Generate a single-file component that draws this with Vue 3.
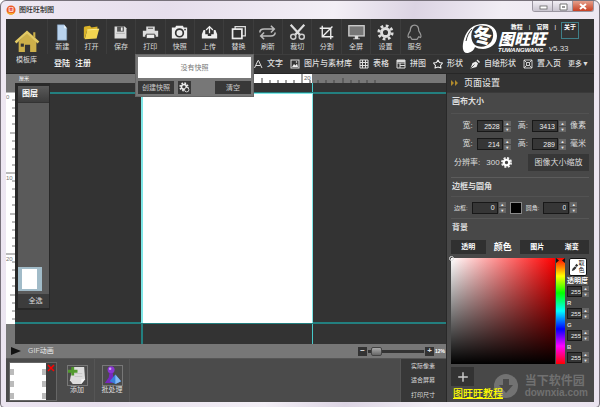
<script setup>
import { ref } from 'vue'

const tools = [
  { label: '新建', icon: '<path d="M4 1h8l3 4v14H4z" fill="#b9d3ee" stroke="#7f9fc0" stroke-width=".6"/><path d="M12 1v4h3z" fill="#edf5fc"/>' },
  { label: '打开', icon: '<path d="M1 4l1-1 6-1 2 2 7-1v4H5L2 17H1z" fill="#d9b227"/><path d="M5 7l14-1-3 11-14 1z" fill="#f3d550"/><path d="M5 7l14-1" stroke="#fff2a0"/>' },
  { label: '保存', icon: '<path d="M3 3h12l2 2v12H3z" fill="#ddd"/><path d="M6 3h8v6H6z" fill="#555"/><path d="M10.500 4h2v4h-2z" fill="#eee"/><path d="M5 11h10" stroke="#aaa"/>' },
  { label: '打印', icon: '<path d="M5 3h10v5H5zM1 8h18v7h-3v-2H4v2H1z" fill="#ddd"/><path d="M5 12h10v5H5z" fill="#eee" stroke="#333"/><path d="M7 5h6" stroke="#333"/>' },
  { label: '快照', icon: '<path d="M1 4h4l1-2h8l1 2h4v13H1z" fill="#eee"/><circle cx="10" cy="10.500" r="4.500" fill="#eee" stroke="#333" stroke-width="2"/><circle cx="16.500" cy="6.500" r="1" fill="#333"/>' },
  { label: '上传', icon: '<path d="M5 7H3l-2 5v5h18v-5l-2-5h-2v5h-3v2H8v-2H5z" fill="#eee"/><path d="M10 11V3M6 7l4-4 4 4" fill="none" stroke="#eee" stroke-width="1.500"/>' },
  { label: '替换', icon: '<path d="M6 6V3h12v11h-4" fill="none" stroke="#ddd" stroke-width="1.500"/><rect x="3" y="6" width="11" height="11" fill="#333" stroke="#eee" stroke-width="2"/>' },
  { label: '刷新', icon: '<path d="M1 10c0-3 2-4 5-4h11M14 2l4 4-4 4M19 10c0 3-2 4-5 4H3M6 10l-4 4 4 4" fill="none" stroke="#bbb" stroke-width="1.800"/>' },
  { label: '裁切', icon: '<path d="M2 1l11 12M18 1L7 13" stroke="#ddd" stroke-width="2.600"/><circle cx="5" cy="15" r="3" fill="none" stroke="#ccc" stroke-width="1.800"/><circle cx="15" cy="15" r="3" fill="none" stroke="#ccc" stroke-width="1.800"/>' },
  { label: '分割', icon: '<path d="M5 2v13h13M2 5h13v13M5 15L17 3" fill="none" stroke="#eee" stroke-width="1.600"/>' },
  { label: '全屏', icon: '<rect x="1" y="2" width="18" height="12" fill="#777" stroke="#ccc" stroke-width="1.600"/><path d="M8 14h4v3h2v1H6v-1h2z" fill="#ddd"/>' },
  { label: '设置', icon: '<circle cx="10" cy="10" r="7.800" fill="none" stroke="#ddd" stroke-width="3.400" stroke-dasharray="3.200 2.930"/><circle cx="10" cy="10" r="4.700" fill="none" stroke="#ddd" stroke-width="3.400"/>' },
  { label: '服务', icon: '<path d="M5 8c0-9 10-9 10 0 2 3 4 6 2 8l-2-1-2 3H7l-2-3-2 1c-2-2 0-5 2-8z" fill="none" stroke="#999" stroke-width="1.400"/>' }
]

const inserts = [
  { label: '文字', icon: '<path d="M3 18L10 3h1l7 15M6 13h9" fill="none" stroke="#ddd" stroke-width="2"/>' },
  { label: '图片与素材库', icon: '<path d="M1 1h18v18H1z" fill="#ddd"/><path d="M3 3h14v14H3z" fill="#333"/><path d="M4 16l4-6 3 3 3-4 2 7z" fill="#eee"/><circle cx="13" cy="6" r="1.500" fill="#eee"/>' },
  { label: '表格', icon: '<path d="M2 2h16v16H2zM7 2v16M13 2v16M2 7h16M2 13h16" fill="none" stroke="#ddd" stroke-width="2"/>' },
  { label: '拼图', icon: '<path d="M2 2h16v16H2zM2 8h16M8 8v10M8 13h10" fill="none" stroke="#ddd" stroke-width="2"/><path d="M2 2h16v4H2z" fill="#ddd"/>' },
  { label: '形状', icon: '<path d="M10 2l3 5 6 1-4 5 1 5-6-2-6 2 1-5-4-5 6-1z" fill="none" stroke="#eee" stroke-width="2.200" stroke-linejoin="round"/>' },
  { label: '自绘形状', icon: '<path d="M1 19L5 8l7-3 4 4-3 7zM13 3l2-2 5 5-2 2z" fill="#eee"/><path d="M2 18l7-7" stroke="#333" stroke-width="1.500"/>' },
  { label: '置入页', icon: '<path d="M2 2h16v16H2zM2 2l5 5m11-5l-5 5M2 18l5-5m11 5l-5-5" fill="none" stroke="#ddd" stroke-width="1.800"/><path d="M7 7h6v6H7z" fill="none" stroke="#ddd" stroke-width="1.800"/>' }
]

const units = Array.from({ length: 30 }, (_, i) => {
  const offset = Math.round(i * 8.1)
  return { n: i, offset, size: i % 10 === 0 ? 9 : i % 5 === 0 ? 5 : 3 }
})

const sizes = ref([
  { id: 'px', w: 2528, h: 3413, unit: '像素' },
  { id: 'mm', w: 214, h: 289, unit: '毫米' }
])
const border = ref(0)
const radius = ref(0)
const tabs = ['透明', '颜色', '图片', '渐变']
const tab = ref('颜色')
const channels = ref([
  { name: '透明度', value: 255 },
  { name: 'R', value: 255 },
  { name: 'G', value: 255 },
  { name: 'B', value: 255 }
])
const views = ['实际像素', '适合屏幕', '打印尺寸']
const zoom = ref(12)
</script>

<template>
  <div class="window">
    <header class="titlebar">
      <svg class="app-icon" viewBox="0 0 20 20">
        <circle cx="10" cy="10" r="9" fill="#ee5a24" />
        <path d="M1 13c3 9 15 8 18 0-5 4-12 4-18 0z" fill="#f6b02c" />
        <rect x="5" y="4" width="10" height="10" rx="2" fill="#fbd5c8" />
        <path d="M7 7h6M7 10h6M10 5v7" stroke="#e0303c" stroke-width="1.5" />
      </svg>
      <span class="title">图旺旺制图</span>
      <div class="controls">
        <button aria-label="最小化"><svg viewBox="0 0 18 11"><rect x="6" y="5" width="7" height="3" fill="#fff" stroke="#666" stroke-width=".8" /></svg></button>
        <button aria-label="还原"><svg viewBox="0 0 18 11"><path d="M6 3h7v6H6z" fill="#fff" stroke="#777" /><path d="M8 5h3v2H8z" fill="#999" /></svg></button>
        <button class="close" aria-label="关闭"><svg viewBox="0 0 18 11"><path d="M6 3l6 5M12 3L6 8" stroke="#fff" stroke-width="2" /></svg></button>
      </div>
    </header>

    <div class="app">
      <div class="topbar">
        <button class="home">
          <svg viewBox="0 0 24 24">
            <path d="M4 12v10h6v-7h5v7h6V12l-9-8z" fill="#cdb04a" />
            <path d="M1 13L12 3l11 10" fill="none" stroke="#e2c964" stroke-width="2.4" />
            <path d="M18 3h2v6l-2-2z" fill="#cdb04a" />
            <path d="M6 14h3v3H6z" fill="#333" />
          </svg>
          <span>模板库</span>
        </button>
        <div class="bars">
          <div class="tools-row">
            <nav class="tools">
              <button v-for="t in tools" :key="t.label" class="tool">
                <svg viewBox="0 0 20 20" v-html="t.icon"></svg>
                <span>{{ t.label }}</span>
              </button>
            </nav>
            <div class="brand">
              <svg class="brand-mark" viewBox="0 0 36 31">
                <path d="M6 30C0 31 0 23 2 16 5 6 12 1 21 1c9 0 14 5 14 12 0 8-7 13-14 13-4 0-6-1-8-2-1 3-3 5-7 6z" fill="#fff" />
                <path d="M13 4c-5 4-5 14 0 18 5 3 12 2 16-3 3-5 3-11-1-14-4-3-11-3-15-1z" fill="#333" />
                <path d="M4 18C5 13 7 9 10 6" fill="none" stroke="#333" stroke-width="1" />
                <text x="11" y="20" font-size="19" font-weight="900" fill="#fff">冬</text>
              </svg>
              <div class="brand-name">
                <strong>图旺旺</strong>
                <em>TUWANGWANG</em>
              </div>
              <div class="brand-side">
                <div class="links"><a href="#">教程</a><i>|</i><a href="#">官网</a><i>|</i><a href="#" class="about">关于</a></div>
                <span class="version">v5.33</span>
              </div>
            </div>
          </div>
          <div class="insert-row">
            <div class="account"><a href="#">登陆</a><a href="#">注册</a></div>
            <nav class="inserts">
              <button v-for="t in inserts" :key="t.label">
                <svg viewBox="0 0 20 20" v-html="t.icon"></svg>{{ t.label }}
              </button>
              <button class="more">更多▼</button>
            </nav>
          </div>
        </div>
        <div class="snapshot">
          <p>没有快照</p>
          <div class="snapshot-actions">
            <button>创建快照</button>
            <button class="cog" aria-label="快照设置">
              <svg viewBox="0 0 20 20"><circle cx="9" cy="9" r="7" fill="none" stroke="#eee" stroke-width="3" stroke-dasharray="3 2.500" /><circle cx="9" cy="9" r="4.500" fill="none" stroke="#eee" stroke-width="3" /><circle cx="14" cy="14" r="4" fill="#333" stroke="#eee" stroke-width="1.500" /></svg>
            </button>
            <button class="clear">清空</button>
          </div>
        </div>
      </div>

      <div class="main">
        <div class="left">
          <div class="workspace">
            <div class="ruler-left">
              <svg>
                <g v-for="u in units" :key="u.n">
                  <line :x1="9 - u.size" x2="9" :y1="u.offset" :y2="u.offset" stroke="#777" />
                  <text v-if="u.n % 10 === 0" x="0" :y="u.offset + 7" font-size="6" fill="#777">{{ u.n }}</text>
                </g>
              </svg>
            </div>
            <div class="stage">
              <div class="ruler-top">
                <span class="unit">厘米</span>
                <div class="scale">
                  <svg>
                    <g v-for="u in units" :key="u.n">
                      <line :x1="u.offset" :x2="u.offset" :y1="9 - u.size" y2="9" stroke="#444" />
                      <text v-if="u.n % 10 === 0" :x="u.offset + 2" y="6" font-size="6" fill="#666">{{ u.n }}</text>
                    </g>
                  </svg>
                </div>
              </div>
              <div class="canvas">
                <div class="guide-v"></div>
                <div class="guide-v far"></div>
                <div class="guide-h"></div>
                <div class="guide-h low"></div>
                <div class="page"></div>
                <section class="layers">
                  <h2>图层</h2>
                  <div class="layer"><span></span></div>
                  <button>全选</button>
                </section>
              </div>
            </div>
          </div>

          <div class="gifbar">
            <button class="play" aria-label="播放"><svg viewBox="0 0 10 10"><path d="M0 1l10 4-10 4z" fill="#111" /></svg></button>
            <span class="gif">GIF动画</span>
            <button class="step-btn" aria-label="缩小">−</button>
            <input v-model="zoom" class="zoom" type="range" min="0" max="200" aria-label="缩放">
            <button class="step-btn" aria-label="放大">+</button>
            <span class="percent">12%</span>
          </div>

          <div class="frames">
            <div class="frame">
              <span class="thumb"></span>
              <button aria-label="删除"><svg viewBox="0 0 8 8"><path d="M1 1l6 6M7 1L1 7" stroke="#f00" stroke-width="1.500" /></svg></button>
            </div>
            <button class="action">
              <svg viewBox="0 0 20 20"><path d="M5 1h12l1 13-4 5H5l-3-4z" fill="#ddd" /><path d="M14 19v-5h4z" fill="#f7f7f7" /><path d="M7 8h8M7 11h8" stroke="#bbb" stroke-width=".7" /><path d="M5 1v9M0 5.500h10" stroke="#519a2d" stroke-width="3" /></svg>
              <span>添加</span>
            </button>
            <button class="action">
              <svg viewBox="0 0 20 20"><path d="M7 6h3l1 6 4 6H2l4-6z" fill="#7628bd" /><circle cx="8.500" cy="4" r="3.700" fill="#8a35d2" /><circle cx="7.500" cy="3" r="1.300" fill="#d1a3f5" /><path d="M13 9l6 7-6 3-6-3z" fill="#397fda" /><path d="M13 9l6 7-6 3z" fill="#83b9f4" /></svg>
              <span>批处理</span>
            </button>
            <div class="views"><button v-for="v in views" :key="v">{{ v }}</button></div>
          </div>
        </div>

        <aside class="panel">
          <h2 class="panel-title"><svg viewBox="0 0 8 6"><path d="M0 0l3 3-3 3zM4 0l3 3-3 3z" fill="#b08a2c" /></svg>页面设置</h2>
          <div class="settings">
            <h3>画布大小</h3>
            <div v-for="s in sizes" :key="s.id" class="size-row">
              <label :for="'w-' + s.id">宽:</label>
              <span class="spin"><input :id="'w-' + s.id" v-model="s.w"><span class="arrows"><button aria-label="增加宽" @click="s.w++">▲</button><button aria-label="减少宽" @click="s.w--">▼</button></span></span>
              <label :for="'h-' + s.id">高:</label>
              <span class="spin"><input :id="'h-' + s.id" v-model="s.h"><span class="arrows"><button aria-label="增加高" @click="s.h++">▲</button><button aria-label="减少高" @click="s.h--">▼</button></span></span>
              <span>{{ s.unit }}</span>
            </div>
            <div class="dpi-row">
              <span>分辨率:</span><span class="dpi">300</span>
              <button class="dpi-cog" aria-label="分辨率设置"><svg viewBox="0 0 20 20"><circle cx="10" cy="10" r="8" fill="none" stroke="#eee" stroke-width="4" stroke-dasharray="3.600 2.700" /><circle cx="10" cy="10" r="5" fill="#444" stroke="#fff" stroke-width="4" /></svg></button>
              <button class="resize">图像大小缩放</button>
            </div>
            <h3 class="ruled">边框与圆角</h3>
            <div class="border-row">
              <label for="bd">边框:</label>
              <span class="spin"><input id="bd" v-model="border"><span class="arrows"><button aria-label="增加边框" @click="border++">▲</button><button aria-label="减少边框" @click="border--">▼</button></span></span>
              <button class="swatch" aria-label="边框颜色"></button>
              <label for="rd">圆角:</label>
              <span class="spin"><input id="rd" v-model="radius"><span class="arrows"><button aria-label="增加圆角" @click="radius++">▲</button><button aria-label="减少圆角" @click="radius--">▼</button></span></span>
            </div>
            <h3 class="plain">背景</h3>
            <div class="tabs">
              <button v-for="t in tabs" :key="t" :class="{ active: tab === t }" @click="tab = t">{{ t }}</button>
            </div>
            <div class="picker">
              <div class="field"><span class="cursor"></span></div>
              <div class="hue"><svg viewBox="0 0 9 5"><path d="M0 0l3 2.500L0 5zM9 0L6 2.500 9 5z" fill="#111" /></svg></div>
              <div class="channels">
                <button class="dropper"><svg viewBox="0 0 10 12"><path d="M1 11l1-3 3-3 2 2-3 3zM5 4l2-2 2 2-2 2z" fill="#333" /></svg><span>取色</span></button>
                <div v-for="c in channels" :key="c.name" class="channel">
                  <label :for="'c-' + c.name">{{ c.name }}</label>
                  <span class="spin small"><input :id="'c-' + c.name" v-model="c.value"><span class="arrows"><button aria-label="增加" @click="c.value++">▲</button><button aria-label="减少" @click="c.value--">▼</button></span></span>
                </div>
              </div>
            </div>
            <button class="add" aria-label="添加颜色"><svg viewBox="0 0 10 10"><path d="M5 1v8M1 5h8" stroke="#ccc" stroke-width="1.200" /></svg></button>
            <a class="tutorial" href="#">图旺旺教程</a>
          </div>
          <div class="watermark">
            <svg viewBox="0 0 24 24"><circle cx="12" cy="12" r="12" fill="#727272" /><path d="M9 5h6v6h4l-7 8-7-8h4z" fill="#4b4b4b" /></svg>
            <div><b>当下软件园</b><span>downxia.com</span></div>
          </div>
        </aside>
      </div>
    </div>
  </div>
</template>

<style>
body { margin: 0; background: #fff; }
</style>

<style scoped>
* { box-sizing: border-box; }
.window {
  min-height: 100vh;
  display: flex;
  flex-direction: column;
  padding: 0 5px 5px;
  border: 1px solid #77717a;
  border-radius: 6px 6px 4px 4px;
  background: linear-gradient(100deg, #efe9f3 0%, #e6deec 25%, #f3eff6 50%, #dcd4e3 62%, #f1edf4 75%, #eae3ef 100%);
  font-family: "Liberation Sans", "Noto Sans CJK SC", sans-serif;
  font-size: 8px;
  line-height: 10px;
  color: #ddd;
}
button { padding: 0; margin: 0; border: 0; background: none; color: inherit; font: inherit; display: flex; align-items: center; justify-content: center; white-space: nowrap; }
a { color: inherit; text-decoration: none; }
h2, h3, p { margin: 0; }
svg { display: block; }
.titlebar { height: 18px; display: flex; align-items: center; gap: 3px; color: #222; }
.app-icon { width: 10px; height: 10px; }
.title { flex: 1; font-size: 7px; font-weight: 500; }
.controls { align-self: flex-start; display: flex; border: 1px solid #9a95a0; border-top: 0; border-radius: 0 0 3px 3px; overflow: hidden; }
.controls button { width: 20px; height: 10px; border-right: 1px solid #9a95a0; background: linear-gradient(#f2eff5, #c9c4cf); }
.controls svg { width: 18px; height: 11px; }
.controls .close { width: 20px; border: 0; background: linear-gradient(#e5a08c, #c83f22); }

.app { flex: 1; display: flex; flex-direction: column; background: #333; }
.topbar { position: relative; height: 55px; display: flex; border-bottom: 1px solid #272727; }
.home { width: 41px; flex-direction: column; gap: 2px; font-size: 7px; line-height: 8px; }
.home svg { width: 26px; height: 25px; }
.bars { flex: 1; min-width: 0; }
.tools-row { height: 35px; display: flex; justify-content: space-between; }
.tools { width: 382px; display: grid; grid-template-columns: repeat(13, 1fr); }
.tool { flex-direction: column; gap: 1px; justify-content: flex-start; padding-top: 5px; font-size: 7px; line-height: 10px; border-left: 1px solid #3d3d3d; }
.tool svg { width: 17px; height: 17px; }
.brand { display: flex; padding-top: 4px; }
.brand-mark { width: 36px; height: 31px; }
.brand-name { display: flex; flex-direction: column; padding-top: 9px; width: 47px; color: #fff; font-style: italic; }
.brand-name strong { font-size: 16px; line-height: 15px; font-weight: 900; white-space: nowrap; }
.brand-name em { font-size: 6px; line-height: 7px; font-weight: 700; }
.brand-side { width: 49px; padding-left: 4px; position: relative; display: flex; align-items: flex-end; }
.links { position: absolute; right: 16px; top: 0; display: flex; gap: 6px; font-size: 6px; line-height: 8px; font-weight: 700; color: #fff; white-space: nowrap; }
.links i { font-style: normal; font-weight: 400; }
.about { width: 16px; height: 15px; padding-left: 2px; outline: 1px solid #3f7f88; }
.version { font-size: 8px; line-height: 11px; }
.insert-row { height: 19px; display: flex; align-items: center; justify-content: space-between; font-weight: 500; }
.account { display: flex; gap: 5px; padding-left: 7px; color: #fff; }
.inserts { width: 341px; display: flex; justify-content: space-between; padding-right: 5px; border-top: 1px solid #3d3d3d; height: 19px; }
.inserts button { gap: 4px; }
.inserts svg { width: 10px; height: 10px; }
.inserts .more { font-size: 7px; }

.snapshot { position: absolute; left: 129px; top: 35px; z-index: 3; width: 119px; padding: 2px; background: #777; border: 1px solid #666; color: #777; font-size: 7px; }
.snapshot p { background: #fff; height: 21px; line-height: 21px; text-align: center; }
.snapshot-actions { display: flex; gap: 4px; padding-top: 3px; color: #ccc; }
.snapshot-actions button { width: 36px; height: 13px; background: #383838; }
.snapshot-actions .cog { width: 13px; }
.cog svg { width: 11px; height: 11px; }
.snapshot-actions .clear { margin-left: auto; }

.main { flex: 1; display: flex; }
.left { flex: 1; min-width: 0; display: flex; flex-direction: column; }
.workspace { flex: 1; display: flex; background: #777; }
.ruler-left { width: 9px; padding: 18px 0 20px; }
.ruler-left svg { width: 9px; height: 232px; background: #fff; }
.stage { flex: 1; min-width: 0; display: flex; flex-direction: column; }
.ruler-top { height: 9px; display: flex; }
.unit { width: 125px; font-size: 5px; line-height: 9px; padding-left: 4px; color: #fff; }
.scale { flex: 1; background: linear-gradient(90deg, #fff 172px, #777 172px); }
.scale svg { width: 100%; height: 9px; }
.canvas { flex: 1; position: relative; background: #333; overflow: hidden; }
.page { position: absolute; left: 126px; top: 10px; width: 172px; height: 230px; background: #fff; border: solid #7fe6e6; border-width: 1px 1px 0 2px; }
.guide-h, .guide-v { position: absolute; background: #237f7f; }
.guide-h { left: 0; right: 0; top: 9px; height: 2px; }
.guide-h.low { top: 239px; }
.guide-v { top: 240px; bottom: 0; left: 126px; width: 2px; }
.guide-v.far { left: 297px; top: 0; width: 1px; background: #46c9c9; }
.layers { position: absolute; left: 0; top: 0; width: 35px; height: 227px; padding: 3px 1px 2px 3px; background: #282828; display: flex; flex-direction: column; }
.layers h2 { height: 17px; padding-left: 4px; font-size: 8px; line-height: 16px; background: linear-gradient(#5a5a5a, #3c3c3c); border-bottom: 1px solid #333; color: #fff; }
.layer { flex: 1; display: flex; align-items: flex-end; padding-bottom: 3px; background: #5a5a5a; }
.layer span { width: 24px; height: 24px; border: solid #a1bbc8; border-width: 2px 5px 2px 4px; background: #fff; }
.layers button { height: 14px; padding-left: 4px; font-size: 7px; background: #3c3c3c; }

.gifbar { height: 15px; display: flex; align-items: center; padding: 0 1px 0 5px; background: #777; border-bottom: 1px solid #555; }
.play svg { width: 10px; height: 10px; }
.gif { flex: 1; padding-left: 7px; font-size: 7px; font-weight: 500; }
.step-btn { width: 9px; height: 9px; background: #333; line-height: 8px; font-weight: 700; }
.zoom { appearance: none; width: 56px; height: 11px; margin: 0 1px; background: linear-gradient(transparent 4px, #333 4px, #333 7px, transparent 7px); }
.zoom::-webkit-slider-thumb { appearance: none; width: 11px; height: 9px; border: 1px solid #444; border-radius: 2px; background: linear-gradient(#aaa, #666); }
.percent { padding-left: 1px; font-size: 5px; font-weight: 700; color: #fff; }
.frames { height: 43px; display: flex; background: #4b4b4b; }
.frame { width: 48px; margin: 3px 0 1px 3px; display: flex; justify-content: space-between; align-items: flex-start; border: 1px solid #666; background: #3f3f3f; }
.thumb { width: 36px; align-self: stretch; background: repeating-linear-gradient(#fff 0 6px, #bbb 6px 12px); display: flex; justify-content: center; }
.thumb::after { content: ""; width: 28px; background: #fff; }
.frame button { width: 10px; height: 10px; }
.frame button svg { width: 8px; height: 8px; }
.action { width: 35px; flex-direction: column; justify-content: flex-start; padding-top: 6px; font-size: 7px; line-height: 8px; border-right: 1px solid #555; }
.frame + .action { margin-left: 3px; }
.action svg { width: 21px; height: 21px; border: 1px solid #777; }
.views { width: 46px; margin-left: auto; padding-right: 1px; display: flex; flex-direction: column; justify-content: space-around; background: #383838; border-left: 1px solid #555; font-size: 6px; }

.panel { position: relative; width: 148px; display: flex; flex-direction: column; border-left: 1px solid #292929; }
.panel-title { height: 18px; display: flex; align-items: center; gap: 5px; padding-left: 4px; font-size: 9px; font-weight: 500; }
.panel-title svg { width: 8px; height: 6px; }
.settings { flex: 1; padding: 0 5px 0 4px; background: #484848; border-top: 1px solid #3a3a3a; }
h3 { height: 21px; padding-left: 1px; font-size: 8px; line-height: 18px; font-weight: 700; border-bottom: 1px solid #525252; }
h3.ruled { height: 20px; margin-top: 5px; border-top: 1px solid #5c5c5c; }
h3.plain { height: 22px; line-height: 18px; border: 0; border-top: 1px solid #565656; }
.size-row { height: 18px; display: flex; align-items: center; justify-content: flex-end; gap: 4px; padding-right: 3px; }
h3 + .size-row { margin-top: 3px; }
.size-row label:nth-of-type(2) { padding-left: 3px; }
.spin { display: flex; align-items: center; gap: 1px; }
.spin input { width: 26px; height: 12px; padding: 0 2px 0 0; border: 1px solid #181818; background: #363636; color: #eee; font: 7px/10px "Liberation Sans", sans-serif; text-align: right; }
.arrows { display: flex; flex-direction: column; gap: 1px; }
.arrows button { width: 7px; height: 5px; font-size: 4px; line-height: 5px; background: #666; color: #eee; }
.dpi-row { height: 19px; display: flex; align-items: center; padding-left: 3px; }
.dpi { padding: 0 1px 0 6px; }
.dpi-cog svg { width: 11px; height: 11px; }
.resize { width: 61px; height: 17px; margin-left: auto; background: #373737; }
.border-row { height: 21px; display: flex; align-items: center; gap: 4px; padding-left: 3px; font-size: 6px; }
.swatch { width: 12px; height: 12px; border: 1px solid #888; background: #000; }
.tabs { height: 14px; display: flex; background: #303030; font-size: 7px; font-weight: 700; color: #fff; }
.tabs button { flex: 1; }
.tabs .active { font-size: 9px; background: #484848; }
.picker { display: flex; gap: 1px; padding-top: 4px; }
.field { position: relative; flex: 1; background: linear-gradient(transparent, #000), linear-gradient(90deg, #fff, #f00); }
.cursor { position: absolute; left: -2px; top: -2px; width: 5px; height: 5px; border: 1px solid #ddd; border-radius: 50%; }
.hue { width: 9px; background: linear-gradient(#f00, #ff0 17%, #0f0 33%, #0ff 50%, #00f 67%, #f0f 83%, #f00); }
.hue svg { width: 9px; height: 5px; }
.channels { width: 23px; }
.dropper { width: 18px; height: 18px; margin: 0 auto; border: 1px solid #111; border-radius: 2px; background: #fff; color: #222; font-size: 6px; line-height: 7px; }
.dropper svg { width: 8px; height: 10px; }
.dropper span { width: 6px; white-space: normal; }
.channel { height: 22px; padding-left: 1px; font-size: 6px; line-height: 10px; }
.channel label { display: block; white-space: nowrap; font-weight: 700; }
.channel:nth-of-type(1) label { font-size: 7px; color: #fff; }
.small { gap: 0; }
.small input { width: 15px; height: 11px; padding: 0; font-size: 6px; }
.add { width: 23px; height: 19px; margin-top: 3px; background: #333; }
.add svg { width: 12px; height: 12px; }
.tutorial { position: relative; z-index: 2; display: block; width: max-content; margin: 2px 0 0 2px; font-size: 10px; line-height: 12px; font-weight: 500; color: #ff0; text-decoration: underline; }
.watermark { position: absolute; right: 6px; bottom: 4px; z-index: 1; display: flex; align-items: center; gap: 7px; color: #707070; }
.watermark svg { width: 24px; height: 24px; }
.watermark div { display: flex; flex-direction: column; }
.watermark b { font-size: 12px; line-height: 13px; }
.watermark span { font: 700 10px/10px "Liberation Sans", sans-serif; }
</style>
